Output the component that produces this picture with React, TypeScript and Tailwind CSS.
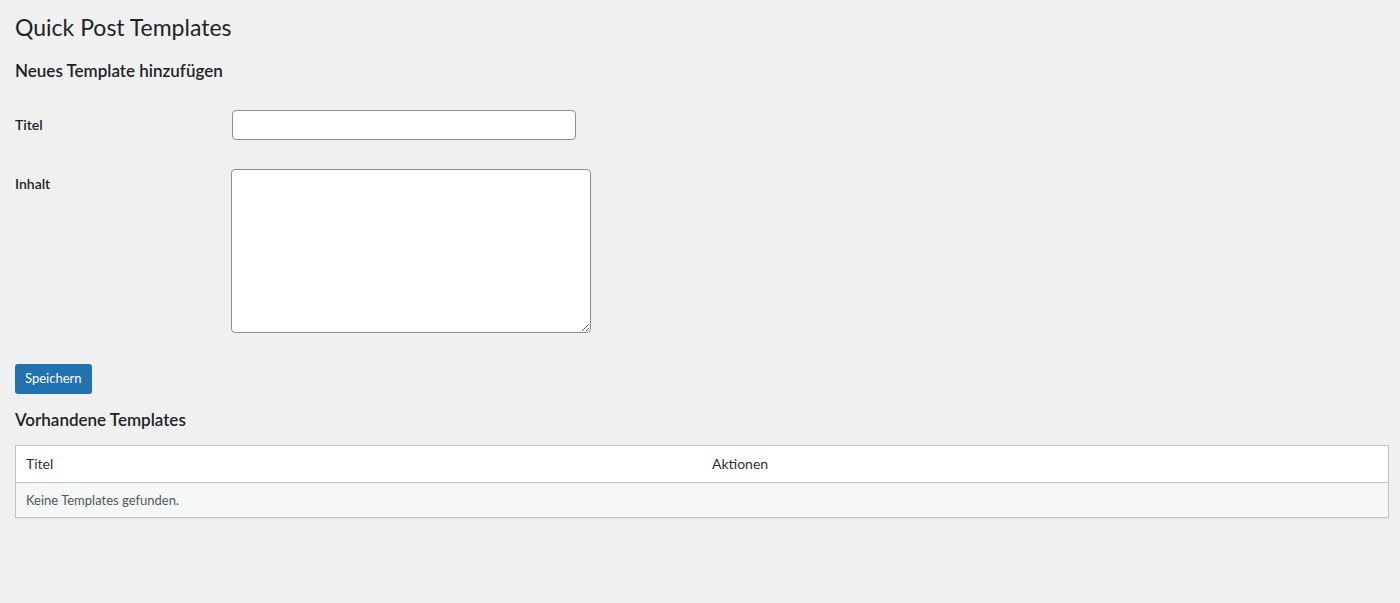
export default function App() {
  return (
    <div
      className="min-h-[603px] bg-[#f0f0f1] pl-[15px] pr-[11px] pt-[12px] text-[#3c434a]"
      style={{ fontFamily: 'Lato, "Liberation Sans", sans-serif' }}
    >
      <h1 className="text-[23px] leading-[30px] font-normal text-[#1d2327]">Quick Post Templates</h1>

      <h2 className="mt-[17px] text-[17px] leading-[24px] font-semibold text-[#1d2327]">
        Neues Template hinzufügen
      </h2>

      <form onSubmit={(e) => e.preventDefault()}>
        <div className="mt-[27px] flex items-start">
          <label htmlFor="title" className="mt-[5px] w-[217px] shrink-0 text-[14px] leading-[20px] font-semibold text-[#1d2327]">
            Titel
          </label>
          <input
            id="title"
            type="text"
            className="h-[30px] w-[344px] rounded-[4px] border border-[#8c8f94] bg-white px-2 text-[14px] focus:outline-none"
          />
        </div>

        <div className="mt-[29px] flex items-start">
          <label htmlFor="content" className="mt-[5px] w-[216px] shrink-0 text-[14px] leading-[20px] font-semibold text-[#1d2327]">
            Inhalt
          </label>
          <textarea
            id="content"
            className="h-[164px] w-[360px] rounded-[4px] border border-[#8c8f94] bg-white px-2 py-1 text-[14px] focus:outline-none"
          />
        </div>

        <button
          type="submit"
          className="mt-[31px] h-[30px] rounded-[3px] bg-[#2271b1] px-[10px] text-[13px] text-white"
        >
          Speichern
        </button>
      </form>

      <h2 className="mt-[14px] text-[17px] leading-[24px] font-semibold text-[#1d2327]">
        Vorhandene Templates
      </h2>

      <div className="mt-[13px] border border-[#c3c4c7] bg-white shadow-[0_1px_1px_rgba(0,0,0,0.04)]">
        <div className="grid grid-cols-2 border-b border-[#c3c4c7] text-[14px] text-[#2c3338]">
          <div className="h-[36px] px-[10px] leading-[36px]">Titel</div>
          <div className="h-[36px] px-[10px] leading-[36px]">Aktionen</div>
        </div>
        <div className="h-[34px] bg-[#f6f7f7] px-[10px] text-[13px] leading-[34px] text-[#50575e]">
          Keine Templates gefunden.
        </div>
      </div>
    </div>
  );
}
